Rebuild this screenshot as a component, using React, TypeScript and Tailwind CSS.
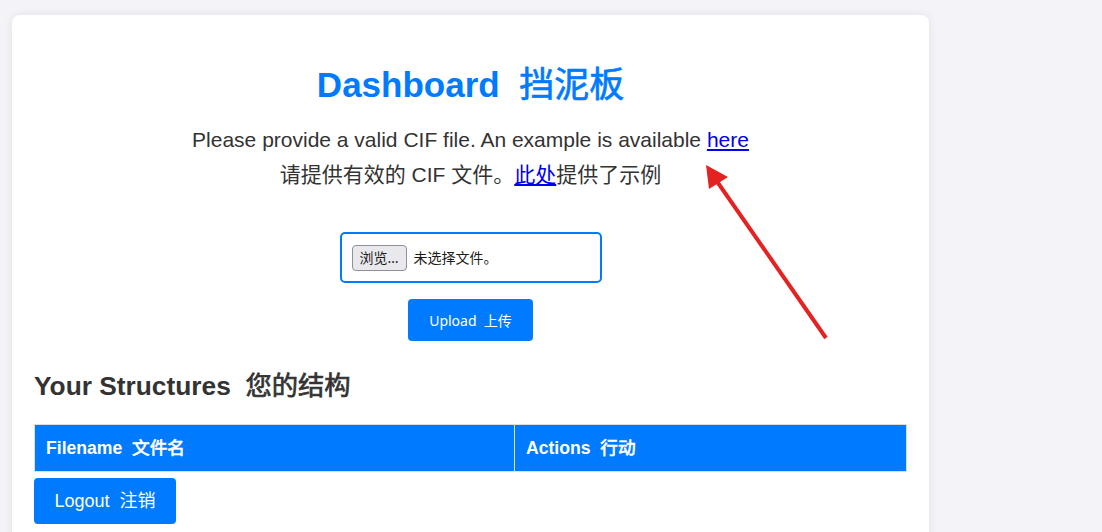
// Dashboard page: upload card with a hand-drawn arrow pointing at the example link.
const SANS = "font-['Liberation_Sans','Noto_Sans_CJK_SC',sans-serif]";
const UI = "font-['Noto_Sans','Noto_Sans_CJK_SC',sans-serif]";

// The CJK half of each bilingual label is a medium weight; the installed CJK
// font has no medium cut, so thicken the regular one a little.
function Zh({ children }: { children: string }) {
  return <span className="font-normal [-webkit-text-stroke:0.7px_currentColor]">{children}</span>;
}

function FakeFileInput() {
  // Chromium draws its own file input, so the Firefox look is rebuilt by hand.
  return (
    <div className="mx-auto flex h-[51px] w-[262px] items-center rounded-[5px] border-2 border-[#007bff] bg-white pl-[10px]">
      <span className={`${UI} flex h-[26px] items-center rounded-[4px] border border-[#8f8f9d] bg-[#e9e9ed] px-[7px] text-[14px] text-[#1b1b1b]`}>
        浏览…
      </span>
      <span className={`${UI} ml-[7px] text-[14px] text-[#1b1b1b]`}>未选择文件。</span>
    </div>
  );
}

function Arrow() {
  return (
    <svg className="pointer-events-none absolute left-0 top-0" width="1102" height="532" aria-hidden>
      <line x1="826" y1="338" x2="716" y2="180" stroke="#e52222" strokeWidth="4" />
      <polygon points="706,165 709,189 728,177" fill="#e52222" />
    </svg>
  );
}

export default function App() {
  return (
    <div className={`${SANS} relative h-[532px] overflow-hidden bg-[#f4f4f8] pl-[12px] pt-[15px]`}>
      <div className="h-[600px] w-[917px] rounded-lg bg-white px-[22px] pt-[50px] shadow-[0_0_10px_rgba(0,0,0,0.08)]">
        <h1 className="text-center text-[35px] font-bold leading-[40px] text-[#007bff]">
          Dashboard{"\u00a0\u00a0"}<Zh>挡泥板</Zh>
        </h1>
        <p className="mt-[17px] text-center text-[21px] leading-[35px] text-[#333]">
          Please provide a valid CIF file. An example is available{" "}
          <a href="#" className="text-[#0000ee] underline">here</a>
          <br />
          请提供有效的 CIF 文件。
          <a href="#" className="text-[#0000ee] underline">此处</a>
          提供了示例
        </p>

        <div className="mt-[40px]">
          <FakeFileInput />
          <div className="mt-[16px] flex justify-center">
            <button type="button" className={`${UI} h-[42px] w-[125px] rounded-[4px] bg-[#007bff] text-[14px] text-white`}>
              Upload{"\u00a0\u00a0"}上传
            </button>
          </div>
        </div>

        <h2 className="mt-[29px] text-[26.3px] font-bold leading-[32px] text-[#333]">
          Your Structures{"\u00a0\u00a0"}<Zh>您的结构</Zh>
        </h2>

        <table className="mt-[22px] w-full border-collapse">
          <thead>
            <tr className="bg-[#007bff] text-left text-[17.6px] font-bold text-white">
              <th className="w-[480px] border border-[#ddd] px-[11px] pb-[12px] pt-[13px] leading-[21px]">
                Filename{"\u00a0\u00a0"}<Zh>文件名</Zh>
              </th>
              <th className="border border-[#ddd] px-[11px] pb-[12px] pt-[13px] leading-[21px]">
                Actions{"\u00a0\u00a0"}<Zh>行动</Zh>
              </th>
            </tr>
          </thead>
          <tbody />
        </table>

        <button type="button" className="mt-[6px] h-[46px] w-[142px] rounded-[4px] bg-[#007bff] text-[18px] text-white">
          Logout{"\u00a0\u00a0"}注销
        </button>
      </div>
      <Arrow />
    </div>
  );
}
